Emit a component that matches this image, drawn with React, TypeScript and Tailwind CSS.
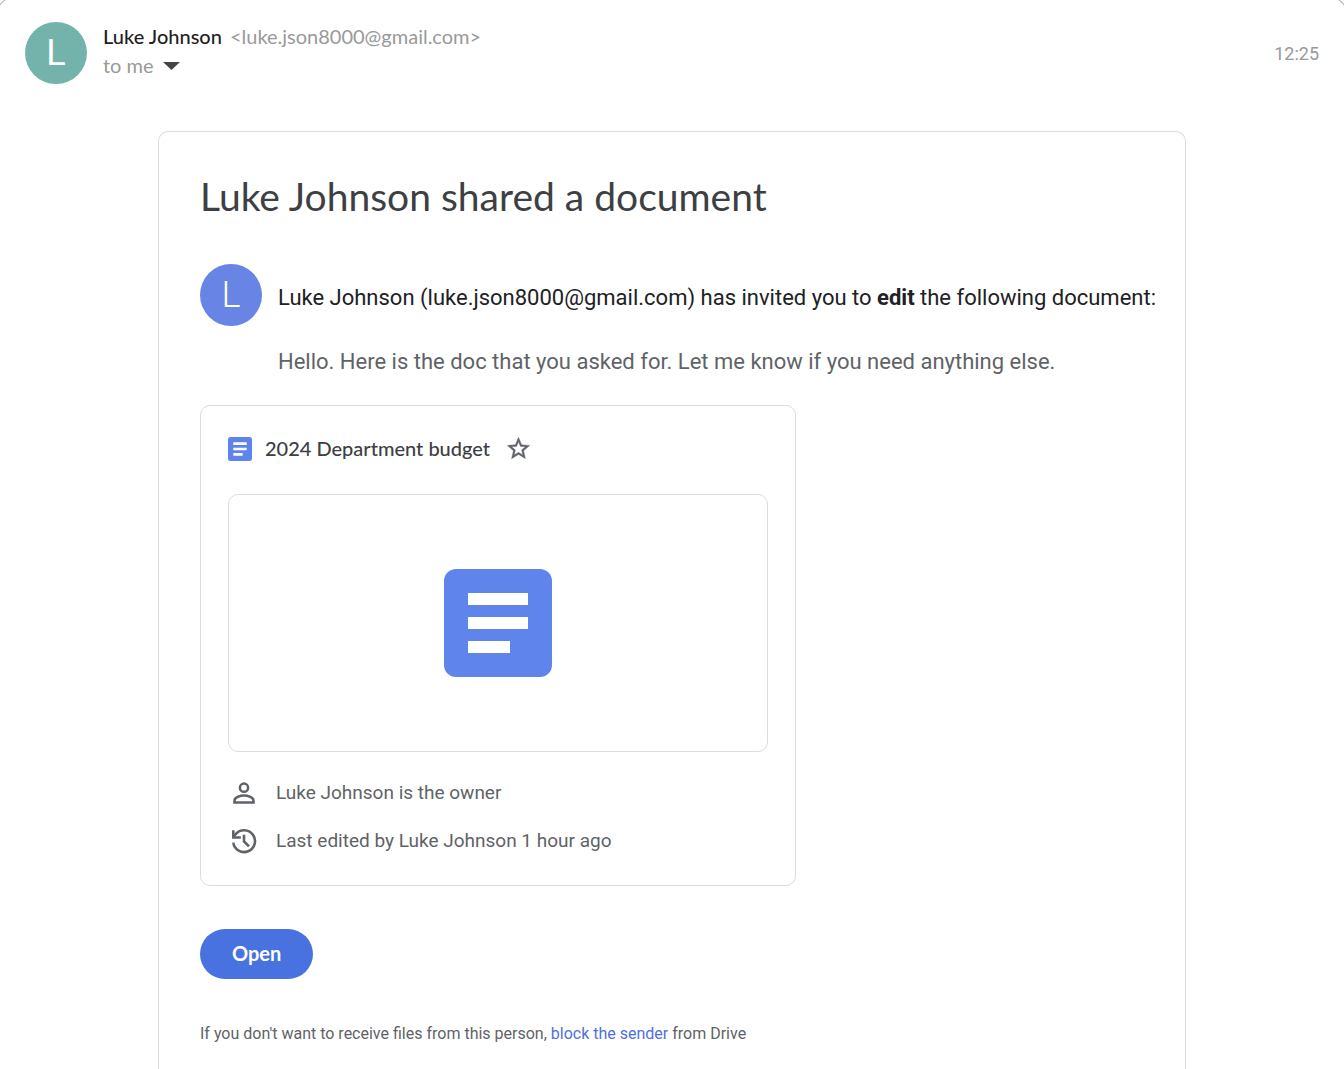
const display = "font-['Lato','Roboto',sans-serif]";

function DocIcon({ className }: { className: string }) {
  return (
    <svg viewBox="0 0 108 108" className={className} aria-hidden="true">
      <rect width="108" height="108" rx="12" fill="#5f85ed" />
      <path fill="#fff" d="M24 24h60v12H24zM24 48h60v12H24zM24 72h42v12H24z" />
    </svg>
  );
}

function StarIcon() {
  return (
    <svg viewBox="0 0 24 24" className="size-[27px]" fill="#5f6368" stroke="#5f6368" strokeWidth="0.3" aria-hidden="true">
      <path d="M22 9.24l-7.19-.62L12 2 9.19 8.63 2 9.24l5.46 4.73L5.82 21 12 17.27 18.18 21l-1.63-7.03L22 9.24zM12 15.4l-3.76 2.27 1-4.28-3.32-2.88 4.38-.38L12 6.1l1.71 4.04 4.38.38-3.32 2.88 1 4.28L12 15.4z" />
    </svg>
  );
}

function PersonIcon() {
  return (
    <svg viewBox="0 0 32 32" className="size-8 shrink-0" fill="none" stroke="#5f6368" strokeWidth="2.5" aria-hidden="true">
      <circle cx="16" cy="10.7" r="4.1" />
      <path d="M6.5 25.6v-2.2c0-3.1 5.5-4.9 9.5-4.9s9.5 1.8 9.5 4.9v2.2z" />
    </svg>
  );
}

function HistoryIcon() {
  return (
    <svg viewBox="0 0 32 32" className="size-8 shrink-0" fill="none" stroke="#5f6368" strokeWidth="2.6" aria-hidden="true">
      <path d="M5.3 17.6A10.9 10.9 0 1 0 7.7 9.2l-2.4 2.8" />
      <path d="M5.3 5.2v7.3h7.5" />
      <path d="M16 9.8v6.6l5 5" />
    </svg>
  );
}

export default function App() {
  return (
    <div className="relative flex min-h-screen flex-col overflow-hidden bg-white font-['Roboto',sans-serif] text-[#202124]">
      <div className="pointer-events-none absolute -inset-x-1 -top-1 h-8 rounded-t-[20px] border border-b-0 border-[#b4b4b4]" />

      <header className="flex items-center px-[25px] pt-[22px]">
        <div className="flex size-[62px] shrink-0 items-center justify-center rounded-full bg-[#74b3ab] text-[36px] text-white">
          L
        </div>
        <div className={`ml-4 flex flex-1 flex-col pb-1 text-[20px] leading-[29px] text-[#999] ${display}`}>
          <div className="flex gap-2">
            <span className="font-medium text-[#1f1f1f]">Luke Johnson</span>
            <span>&lt;luke.json8000@gmail.com&gt;</span>
          </div>
          <button type="button" className="flex items-center gap-[9px] self-start">
            to me
            <svg viewBox="0 0 17 8" className="h-2 w-[17px]" fill="#444" aria-hidden="true">
              <path d="M0 0h17L8.5 8z" />
            </svg>
          </button>
        </div>
        <time className="text-[18px] text-[#999]">12:25</time>
      </header>

      <main className="mx-auto mt-[47px] w-full max-w-[1028px] flex-1 rounded-t-[10px] border border-b-0 border-[#dadce0] pt-[37px] pr-6 pb-6 pl-[41px]">
        <h1 className={`text-[39px] leading-[54px] text-[#3c4043] ${display}`}>Luke Johnson shared a document</h1>

        <section className="mt-[41px] flex gap-4">
          <div className="flex size-[62px] shrink-0 items-center justify-center rounded-full bg-[#6884e4] text-[36px] font-light text-white">
            L
          </div>
          <div className="pt-[18px] text-[22px] leading-8">
            <p>
              Luke Johnson (luke.json8000@gmail.com) has invited you to <b>edit</b> the following document:
            </p>
            <p className="mt-8 text-[#5f6368]">
              Hello. Here is the doc that you asked for. Let me know if you need anything else.
            </p>
          </div>
        </section>

        <section className="mt-[27px] max-w-[596px] rounded-[10px] border border-[#dadce0] px-[27px] pt-[29px] pb-7">
          <div className="flex items-center">
            <DocIcon className="size-6" />
            <h2 className={`ml-[13px] text-[20px] leading-[27px] font-medium text-[#3c4043] ${display}`}>
              2024 Department budget
            </h2>
            <button type="button" aria-label="Star" className="ml-[15px]">
              <StarIcon />
            </button>
          </div>
          <div className="mt-8 flex h-[258px] items-center justify-center rounded-[10px] border border-[#dadce0]">
            <DocIcon className="size-[108px]" />
          </div>
          <ul className="mt-[25px] flex flex-col gap-4 text-[19px] leading-8 text-[#5f6368]">
            <li className="flex items-center gap-4">
              <PersonIcon />
              Luke Johnson is the owner
            </li>
            <li className="flex items-center gap-4">
              <HistoryIcon />
              Last edited by Luke Johnson 1 hour ago
            </li>
          </ul>
        </section>

        <button
          type="button"
          className={`mt-[43px] h-[50px] rounded-full bg-[#4872e0] px-8 pb-[2px] text-[20px] font-bold text-white ${display}`}
        >
          Open
        </button>

        <p className="mt-[43px] text-[16px] leading-6 text-[#5f6368]">
          If you don't want to receive files from this person,{" "}
          <a href="#block" className="text-[#4f6fe0]">
            block the sender
          </a>{" "}
          from Drive
        </p>
      </main>
    </div>
  );
}
